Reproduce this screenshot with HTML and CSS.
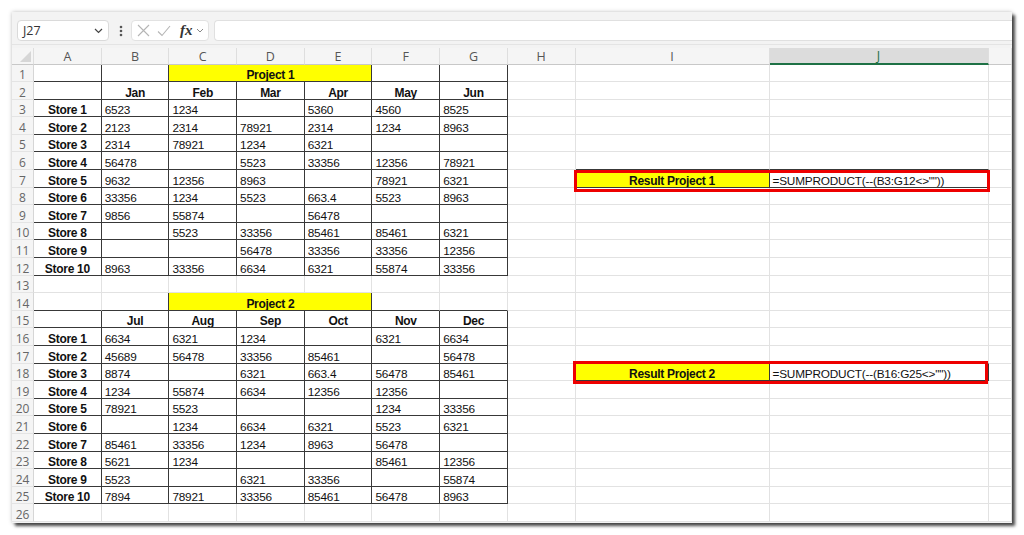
FILE: index.html
```html
<!DOCTYPE html>
<html>
<head>
<meta charset="utf-8">
<link rel="stylesheet" href="styles.css">
</head>
<body>
<div class="window">
  <div class="toolbar">
    <div class="namebox"><span>J27</span>
      <svg class="chev" width="9" height="6" viewBox="0 0 9 6"><polyline points="1,1 4.5,4.5 8,1" fill="none" stroke="#444" stroke-width="1.2"/></svg>
    </div>
    <svg class="dots" width="4" height="12" viewBox="0 0 4 12"><circle cx="2" cy="2" r="1.3" fill="#555"/><circle cx="2" cy="6" r="1.3" fill="#555"/><circle cx="2" cy="10" r="1.3" fill="#555"/></svg>
    <div class="fbox">
      <svg width="13" height="13" viewBox="0 0 13 13"><path d="M1 1 L12 12 M12 1 L1 12" stroke="#b5b5b5" stroke-width="1.1" fill="none"/></svg>
      <svg width="14" height="12" viewBox="0 0 14 12"><path d="M1 6.5 L5 10.5 L13 1" stroke="#b5b5b5" stroke-width="1.1" fill="none"/></svg>
      <span class="fx">fx</span>
      <svg width="8" height="5" viewBox="0 0 8 5"><polyline points="1,1 4,4 7,1" fill="none" stroke="#888" stroke-width="1"/></svg>
    </div>
    <div class="finput"></div>
  </div>
  <div class="gap"></div>
  <table class="sheet">
    <colgroup>
      <col class="c-rh"><col class="c-n"><col class="c-n"><col class="c-n"><col class="c-n"><col class="c-n"><col class="c-n"><col class="c-n"><col class="c-n"><col class="c-i"><col class="c-j"><col class="c-k">
    </colgroup>
    <tr class="colhdr">
      <th class="corner"><svg width="13" height="13" viewBox="0 0 13 13"><polygon points="12,1 12,12 1,12" fill="#d6d6d6"/></svg></th>
      <th>A</th><th>B</th><th>C</th><th>D</th><th>E</th><th>F</th><th>G</th><th>H</th><th>I</th><th class="sel">J</th><th></th>
    </tr>
    <tr><th>1</th><td class="d"></td><td class="d"></td><td colspan="3" class="d y h">Project 1</td><td class="d"></td><td class="d"></td><td></td><td></td><td></td><td></td></tr>
    <tr><th>2</th><td class="d"></td><td class="d h">Jan</td><td class="d h">Feb</td><td class="d h">Mar</td><td class="d h">Apr</td><td class="d h">May</td><td class="d h">Jun</td><td></td><td></td><td></td><td></td></tr>
    <tr><th>3</th><td class="d h">Store 1</td><td class="d">6523</td><td class="d">1234</td><td class="d"></td><td class="d">5360</td><td class="d">4560</td><td class="d">8525</td><td></td><td></td><td></td><td></td></tr>
    <tr><th>4</th><td class="d h">Store 2</td><td class="d">2123</td><td class="d">2314</td><td class="d">78921</td><td class="d">2314</td><td class="d">1234</td><td class="d">8963</td><td></td><td></td><td></td><td></td></tr>
    <tr><th>5</th><td class="d h">Store 3</td><td class="d">2314</td><td class="d">78921</td><td class="d">1234</td><td class="d">6321</td><td class="d"></td><td class="d"></td><td></td><td></td><td></td><td></td></tr>
    <tr><th>6</th><td class="d h">Store 4</td><td class="d">56478</td><td class="d"></td><td class="d">5523</td><td class="d">33356</td><td class="d">12356</td><td class="d">78921</td><td></td><td class="bb"></td><td class="bb"></td><td></td></tr>
    <tr><th>7</th><td class="d h">Store 5</td><td class="d">9632</td><td class="d">12356</td><td class="d">8963</td><td class="d"></td><td class="d">78921</td><td class="d">6321</td><td class="br"></td><td class="d y h">Result Project 1</td><td class="d">=SUMPRODUCT(--(B3:G12&lt;&gt;""))</td><td></td></tr>
    <tr><th>8</th><td class="d h">Store 6</td><td class="d">33356</td><td class="d">1234</td><td class="d">5523</td><td class="d">663.4</td><td class="d">5523</td><td class="d">8963</td><td></td><td></td><td></td><td></td></tr>
    <tr><th>9</th><td class="d h">Store 7</td><td class="d">9856</td><td class="d">55874</td><td class="d"></td><td class="d">56478</td><td class="d"></td><td class="d"></td><td></td><td></td><td></td><td></td></tr>
    <tr><th>10</th><td class="d h">Store 8</td><td class="d"></td><td class="d">5523</td><td class="d">33356</td><td class="d">85461</td><td class="d">85461</td><td class="d">6321</td><td></td><td></td><td></td><td></td></tr>
    <tr><th>11</th><td class="d h">Store 9</td><td class="d"></td><td class="d"></td><td class="d">56478</td><td class="d">33356</td><td class="d">33356</td><td class="d">12356</td><td></td><td></td><td></td><td></td></tr>
    <tr><th>12</th><td class="d h">Store 10</td><td class="d">8963</td><td class="d">33356</td><td class="d">6634</td><td class="d">6321</td><td class="d">55874</td><td class="d">33356</td><td></td><td></td><td></td><td></td></tr>
    <tr><th>13</th><td></td><td></td><td></td><td></td><td></td><td></td><td></td><td></td><td></td><td></td><td></td></tr>
    <tr><th>14</th><td class="bb"></td><td class="d"></td><td colspan="3" class="d y h">Project 2</td><td class="bb"></td><td class="bb"></td><td></td><td></td><td></td><td></td></tr>
    <tr><th>15</th><td class="d"></td><td class="d h">Jul</td><td class="d h">Aug</td><td class="d h">Sep</td><td class="d h">Oct</td><td class="d h">Nov</td><td class="d h">Dec</td><td></td><td></td><td></td><td></td></tr>
    <tr><th>16</th><td class="d h">Store 1</td><td class="d">6634</td><td class="d">6321</td><td class="d">1234</td><td class="d"></td><td class="d">6321</td><td class="d">6634</td><td></td><td></td><td></td><td></td></tr>
    <tr><th>17</th><td class="d h">Store 2</td><td class="d">45689</td><td class="d">56478</td><td class="d">33356</td><td class="d">85461</td><td class="d"></td><td class="d">56478</td><td></td><td class="bb"></td><td class="bb"></td><td></td></tr>
    <tr><th>18</th><td class="d h">Store 3</td><td class="d">8874</td><td class="d"></td><td class="d">6321</td><td class="d">663.4</td><td class="d">56478</td><td class="d">85461</td><td class="br"></td><td class="d y h">Result Project 2</td><td class="d">=SUMPRODUCT(--(B16:G25&lt;&gt;""))</td><td></td></tr>
    <tr><th>19</th><td class="d h">Store 4</td><td class="d">1234</td><td class="d">55874</td><td class="d">6634</td><td class="d">12356</td><td class="d">12356</td><td class="d"></td><td></td><td></td><td></td><td></td></tr>
    <tr><th>20</th><td class="d h">Store 5</td><td class="d">78921</td><td class="d">5523</td><td class="d"></td><td class="d"></td><td class="d">1234</td><td class="d">33356</td><td></td><td></td><td></td><td></td></tr>
    <tr><th>21</th><td class="d h">Store 6</td><td class="d"></td><td class="d">1234</td><td class="d">6634</td><td class="d">6321</td><td class="d">5523</td><td class="d">6321</td><td></td><td></td><td></td><td></td></tr>
    <tr><th>22</th><td class="d h">Store 7</td><td class="d">85461</td><td class="d">33356</td><td class="d">1234</td><td class="d">8963</td><td class="d">56478</td><td class="d"></td><td></td><td></td><td></td><td></td></tr>
    <tr><th>23</th><td class="d h">Store 8</td><td class="d">5621</td><td class="d">1234</td><td class="d"></td><td class="d"></td><td class="d">85461</td><td class="d">12356</td><td></td><td></td><td></td><td></td></tr>
    <tr><th>24</th><td class="d h">Store 9</td><td class="d">5523</td><td class="d"></td><td class="d">6321</td><td class="d">33356</td><td class="d"></td><td class="d">55874</td><td></td><td></td><td></td><td></td></tr>
    <tr><th>25</th><td class="d h">Store 10</td><td class="d">7894</td><td class="d">78921</td><td class="d">33356</td><td class="d">85461</td><td class="d">56478</td><td class="d">8963</td><td></td><td></td><td></td><td></td></tr>
    <tr><th>26</th><td></td><td></td><td></td><td></td><td></td><td></td><td></td><td></td><td></td><td></td><td></td></tr>
  </table>
  <div class="mark mark1"></div>
  <div class="mark mark2"></div>
</div>
</body>
</html>
```
FILE: styles.css
```css
html, body {
  margin: 0;
  padding: 0;
  background: #ffffff;
}
body {
  width: 1024px;
  height: 535px;
  overflow: hidden;
  font-family: "Liberation Sans", Arial, sans-serif;
}
.window {
  position: relative;
  margin: 12px 0 0 12px;
  width: 1000px;
  height: 511px;
  overflow: hidden;
  background: #f3f3f3;
  box-shadow: 3px 3px 3px rgba(0,0,0,0.7), 0 0 4px rgba(0,0,0,0.25);
}
.toolbar {
  height: 33px;
  box-sizing: border-box;
  display: flex;
  align-items: flex-end;
  padding: 0 0 3px 5px;
  border-bottom: 1px solid #e4e4e4;
}
.namebox {
  width: 92px;
  height: 21px;
  box-sizing: border-box;
  background: #fff;
  border: 1px solid #dadada;
  border-radius: 4px;
  display: flex;
  align-items: center;
  justify-content: space-between;
  padding: 0 5px 0 5px;
  font-family: "Open Sans", "Noto Sans", sans-serif;
  font-size: 12.5px;
  color: #333;
}
.namebox .chev { margin-top: 1px; }
.dots {
  margin: 0 8px 4px 10px;
}
.fbox {
  width: 78px;
  height: 21px;
  box-sizing: border-box;
  background: #fff;
  border: 1px solid #e2e2e2;
  border-radius: 4px;
  display: flex;
  align-items: center;
  padding-left: 5px;
  gap: 7px;
}
.fbox .fx {
  font-family: "Liberation Serif", "DejaVu Serif", serif;
  font-style: italic;
  font-weight: bold;
  font-size: 15px;
  color: #333;
  margin-left: 2px;
  margin-right: -4px;
  line-height: 1;
}
.finput {
  flex: 1;
  height: 21px;
  box-sizing: border-box;
  margin-left: 5px;
  background: #fff;
  border: 1px solid #e0e0e0;
  border-right: none;
  border-radius: 4px 0 0 4px;
}
.gap {
  height: 3px;
}
.sheet {
  table-layout: fixed;
  width: 1000px;
  border-collapse: separate;
  border-spacing: 0;
  background: #fff;
}
.c-rh { width: 22px; }
.c-n { width: 67.7px; }
.c-i { width: 194px; }
.c-j { width: 219px; }
.c-k { width: 23.4px; }
.sheet tr { height: 17.6px; }
.sheet tr.colhdr { height: 16.5px; }
.sheet td {
  box-sizing: border-box;
  padding: 0 3px 1px 3px;
  border-right: 1px solid #e2e2e2;
  border-bottom: 1px solid #e2e2e2;
  font-size: 11.8px;
  letter-spacing: -0.2px;
  line-height: 10px;
  vertical-align: bottom;
  color: #111;
  white-space: nowrap;
  overflow: hidden;
}
.sheet th {
  box-sizing: border-box;
  padding: 0 0 1px 0;
  background: #f5f5f5;
  font-weight: normal;
  font-family: "Open Sans", "Noto Sans", sans-serif;
  color: #666;
  font-size: 12px;
  line-height: 10px;
  vertical-align: bottom;
  border-right: 1px solid #d6d6d6;
  border-bottom: 1px solid #e4e4e4;
  text-align: center;
}
.sheet tr.colhdr th {
  color: #555;
  font-size: 12.5px;
  line-height: 13px;
  vertical-align: middle;
  border-right: 1px solid #dedede;
  border-bottom: 1px solid #c8c8c8;
  padding: 1px 0 0 0;
}
.sheet tr.colhdr th.corner {
  vertical-align: bottom;
  text-align: right;
  line-height: 0;
  padding: 0 1px 1px 0;
}
.sheet tr.colhdr th.sel {
  background: #dcdcdc;
  color: #1e7145;
  border-bottom: 2px solid #1e7145;
}
.sheet td.d {
  border-right-color: #383838;
  border-bottom-color: #383838;
}
.sheet td.bb { border-bottom-color: #383838; }
.sheet td.br { border-right-color: #383838; }
.sheet td.h {
  font-weight: bold;
  text-align: center;
  font-size: 12px;
  letter-spacing: -0.3px;
}
.sheet td.y { background: #ffff00; }
.mark {
  position: absolute;
  box-sizing: border-box;
  border: 3px solid #ee0000;
}
.mark1 {
  left: 562px;
  top: 158px;
  width: 416px;
  height: 22.3px;
}
.mark2 {
  left: 560.7px;
  top: 349px;
  width: 415.6px;
  height: 23.3px;
}
```
